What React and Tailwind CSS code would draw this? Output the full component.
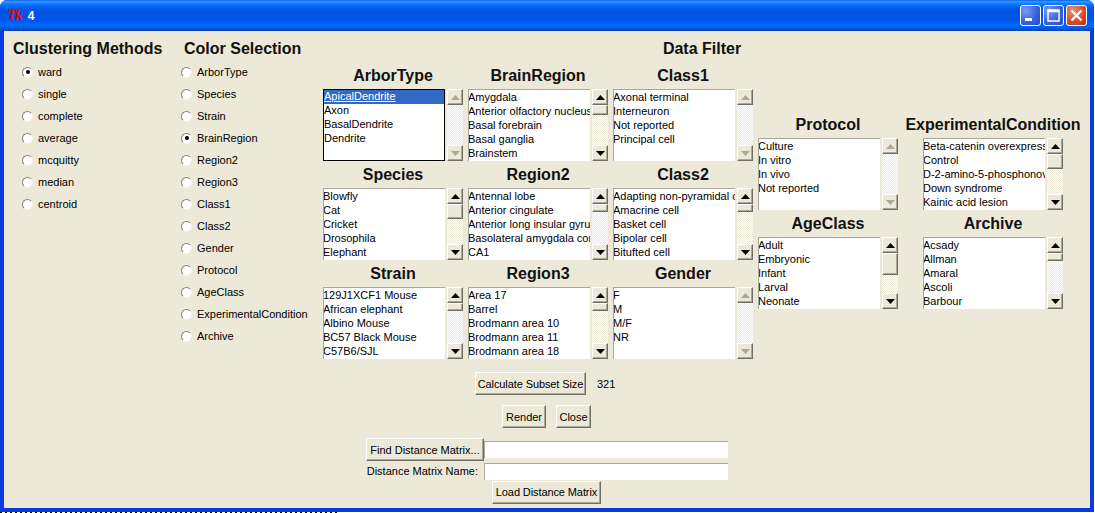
const raised = 'bg-[#ece9d8] border border-t-white border-l-white border-b-[#716f64] border-r-[#716f64] shadow-[inset_-1px_-1px_0_#aca899]';
const track = 'bg-[repeating-conic-gradient(#ece9d8_0%_25%,#ffffff_0%_50%)] bg-[length:2px_2px]';

const methods = ['ward', 'single', 'complete', 'average', 'mcquitty', 'median', 'centroid'];
const colors = ['ArborType', 'Species', 'Strain', 'BrainRegion', 'Region2', 'Region3', 'Class1', 'Class2', 'Gender', 'Protocol', 'AgeClass', 'ExperimentalCondition', 'Archive'];

const leftPanels = [
  { title: 'ArborType', items: ['ApicalDendrite', 'Axon', 'BasalDendrite', 'Dendrite'], selected: true },
  { title: 'BrainRegion', items: ['Amygdala', 'Anterior olfactory nucleus', 'Basal forebrain', 'Basal ganglia', 'Brainstem'], thumb: 10 },
  { title: 'Class1', items: ['Axonal terminal', 'Interneuron', 'Not reported', 'Principal cell'] },
  { title: 'Species', items: ['Blowfly', 'Cat', 'Cricket', 'Drosophila', 'Elephant'], thumb: 15 },
  { title: 'Region2', items: ['Antennal lobe', 'Anterior cingulate', 'Anterior long insular gyrus', 'Basolateral amygdala complex', 'CA1'], thumb: 8 },
  { title: 'Class2', items: ['Adapting non-pyramidal cell', 'Amacrine cell', 'Basket cell', 'Bipolar cell', 'Bitufted cell'], thumb: 8 },
  { title: 'Strain', items: ['129J1XCF1 Mouse', 'African elephant', 'Albino Mouse', 'BC57 Black Mouse', 'C57B6/SJL'], thumb: 8 },
  { title: 'Region3', items: ['Area 17', 'Barrel', 'Brodmann area 10', 'Brodmann area 11', 'Brodmann area 18'], thumb: 8 },
  { title: 'Gender', items: ['F', 'M', 'M/F', 'NR'] },
];

const rightPanels = [
  { title: 'Protocol', items: ['Culture', 'In vitro', 'In vivo', 'Not reported'] },
  { title: 'ExperimentalCondition', items: ['Beta-catenin overexpression', 'Control', 'D-2-amino-5-phosphonovaleric', 'Down syndrome', 'Kainic acid lesion'], thumb: 15 },
  { title: 'AgeClass', items: ['Adult', 'Embryonic', 'Infant', 'Larval', 'Neonate'], thumb: 22 },
  { title: 'Archive', items: ['Acsady', 'Allman', 'Amaral', 'Ascoli', 'Barbour'], thumb: 8 },
];

function Arrow({ up, disabled }) {
  return (
    <div className={`${raised} w-4 h-4 shrink-0 flex items-center justify-center`}>
      <svg width="9" height="5" viewBox="0 0 9 5">
        <path d={up ? 'M4.5 0 L9 5 L0 5 Z' : 'M0 0 L9 0 L4.5 5 Z'} fill={disabled ? '#aca899' : '#000'} />
      </svg>
    </div>
  );
}

function Scrollbar({ thumb }) {
  return (
    <div className={`${track} w-4 h-[72px] flex flex-col shrink-0`}>
      <Arrow up disabled={!thumb} />
      {thumb && <div className={raised} style={{ height: thumb }} />}
      <div className="flex-1" />
      <Arrow disabled={!thumb} />
    </div>
  );
}

function Panel({ title, items, thumb, selected }) {
  return (
    <div className="w-[140px]">
      <div className="h-[27px] flex items-center justify-center whitespace-nowrap text-[16px] font-bold text-[#111]">{title}</div>
      <div className="flex gap-[2px]">
        <div className={`w-[122px] h-[72px] bg-white overflow-hidden ${selected ? 'border border-black' : 'border-t border-l border-[#aca899] pt-px'}`}>
          {items.map((item, i) => (
            <div
              key={item}
              className={`h-[14px] leading-[13px] whitespace-nowrap ${selected ? '' : '-ml-px'} ${selected && i === 0 ? 'bg-[#316ac5] text-white underline' : ''}`}
            >
              {item}
            </div>
          ))}
        </div>
        <Scrollbar thumb={thumb} />
      </div>
    </div>
  );
}

function RadioColumn({ title, options, checked, className, titleClass, rowClass }) {
  return (
    <div className={className}>
      <div className={`h-[25px] flex items-center whitespace-nowrap text-[16px] font-bold text-[#111] ${titleClass}`}>{title}</div>
      {options.map(opt => (
        <div key={opt} className={`h-[22px] flex items-center gap-[5px] ${rowClass}`}>
          <div className="w-[11px] h-[11px] rounded-full bg-white border border-t-[#85827a] border-l-[#85827a] border-b-[#f4f2e8] border-r-[#f4f2e8] flex items-center justify-center">
            {opt === checked && <div className="w-1 h-1 rounded-full bg-black" />}
          </div>
          <span className="whitespace-nowrap">{opt}</span>
        </div>
      ))}
    </div>
  );
}

function Btn({ className, children }) {
  return <div className={`${raised} h-[23px] flex items-center justify-center whitespace-nowrap ${className}`}>{children}</div>;
}

function TitleButton({ close, children }) {
  return (
    <div className={`w-[21px] h-[21px] rounded-[3px] border border-white flex items-center justify-center ${close ? 'bg-[radial-gradient(circle_at_30%_25%,#ec8f70,#d8491f_60%,#b9300c)]' : 'bg-[radial-gradient(circle_at_25%_25%,#7b9cf0,#3a62dc_55%,#2347cf)]'}`}>
      {children}
    </div>
  );
}

export default function App() {
  return (
    <div className="w-[1095px] h-[513px] overflow-hidden bg-white font-['Liberation_Sans',Arial,sans-serif] text-[11px] text-black">
      <div className="w-[1094px] h-[512px] flex flex-col bg-[#0a3be0] rounded-t-[7px] overflow-hidden">
        <div className="h-[31px] shrink-0 flex items-center pl-[7px] pr-[6px] bg-[linear-gradient(180deg,#0058ee_0%,#3593ff_4%,#288eff_8%,#127dff_12%,#036ffc_16%,#0262ee_22%,#0057e5_30%,#0054e3_40%,#0055eb_60%,#005bf5_70%,#026afe_80%,#0062ef_88%,#0052d6_94%,#0040ab_100%)]">
          <span className="font-['Liberation_Serif',serif] font-bold italic text-[15px] leading-none text-[#f00000] tracking-[-1px]">Tk</span>
          <span className="ml-[6px] font-bold text-[12px] text-white">4</span>
          <div className="ml-auto flex gap-[2px] pr-px">
            <TitleButton>
              <svg width="19" height="19" viewBox="0 0 19 19"><rect x="4" y="12" width="7" height="3" fill="#fff" /></svg>
            </TitleButton>
            <TitleButton>
              <svg width="19" height="19" viewBox="0 0 19 19"><path d="M4 4h11v11H4z M4 5.5h11" fill="none" stroke="#fff" strokeWidth="1.4" /></svg>
            </TitleButton>
            <TitleButton close>
              <svg width="19" height="19" viewBox="0 0 19 19"><path d="M4.5 4.5l10 10M14.5 4.5l-10 10" stroke="#fff" strokeWidth="2.2" /></svg>
            </TitleButton>
          </div>
        </div>

        <div className="flex-1 mx-1 mb-1 bg-[#ece9d8] flex pl-[9px] pt-[5px]">
          <RadioColumn className="w-[168px]" title="Clustering Methods" options={methods} checked="ward" titleClass="" rowClass="pl-[9px]" />
          <RadioColumn className="w-[142px]" title="Color Selection" options={colors} checked="BrainRegion" titleClass="pl-[3px]" rowClass="" />

          <div className="w-[765px]">
            <div className="h-[26px] pr-[7px] flex items-center justify-center text-[16px] font-bold text-[#111]">Data Filter</div>
            <div className="flex">
              <div className="grid grid-cols-[145px_145px_145px]">
                {leftPanels.map(p => <Panel key={p.title} {...p} />)}
              </div>
              <div className="grid grid-cols-[165px_165px] content-start mt-[49px]">
                {rightPanels.map(p => <Panel key={p.title} {...p} />)}
              </div>
            </div>

            <div className="mt-[13px] ml-[152px] flex items-center">
              <Btn className="w-[111px] pt-px tracking-[-0.1px]">Calculate Subset Size</Btn>
              <span className="ml-[11px] pt-px">321</span>
            </div>
            <div className="mt-[10px] ml-[179px] flex gap-[10px]">
              <Btn className="w-[44px] pt-px">Render</Btn>
              <Btn className="w-[35px] pt-px">Close</Btn>
            </div>
            <div className="mt-[10px] ml-[43px] flex items-center">
              <Btn className="w-[118px] pt-px">Find Distance Matrix...</Btn>
              <div className="w-[244px] h-[17px] bg-white border-t border-l border-[#aca899]" />
            </div>
            <div className="mt-px ml-[43px] flex items-center h-[18px]">
              <div className="w-[118px] pr-[6px] text-right whitespace-nowrap">Distance Matrix Name:</div>
              <div className="w-[244px] h-[17px] bg-white border-t border-l border-[#aca899]" />
            </div>
            <Btn className="w-[109px] mt-px ml-[169px] tracking-[-0.1px]">Load Distance Matrix</Btn>
          </div>
        </div>
      </div>
      <div className="h-px w-[340px] bg-[repeating-linear-gradient(90deg,#000_0_2px,#fff_2px_5px)]" />
    </div>
  );
}
